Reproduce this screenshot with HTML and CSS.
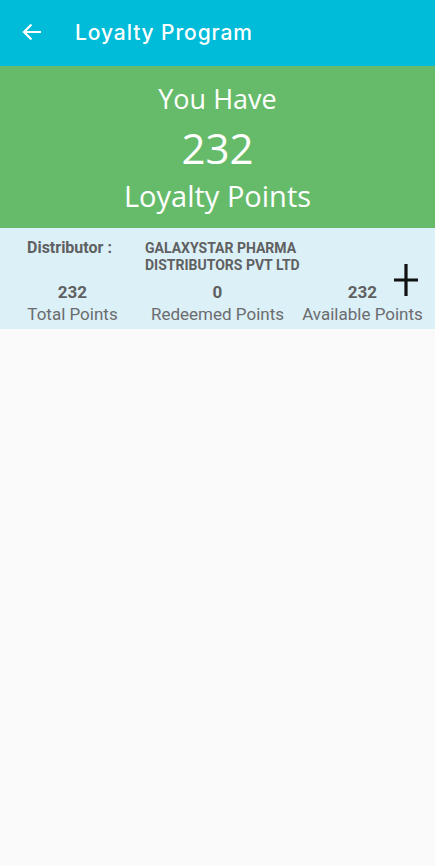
FILE: index.html
```html
<!DOCTYPE html>
<html lang="en">
<head>
    <meta charset="UTF-8">
    <title>Loyalty Program</title>
    <link rel="stylesheet" href="styles.css">
</head>
<body>
<div class="toolbar">
    <svg class="back" width="20" height="18" viewBox="0 0 20 18">
        <path d="M19 9H2M9.5 1.5L2 9l7.5 7.5" fill="none" stroke="#fff" stroke-width="2.2"/>
    </svg>
    <div class="title">Loyalty Program</div>
</div>

<div class="summary">
    <div class="have">You Have</div>
    <div class="total">232</div>
    <div class="label">Loyalty Points</div>
</div>

<div class="distributor">
    <div class="dist-row">
        <div class="dist-key">Distributor :</div>
        <div class="dist-name">GALAXYSTAR PHARMA<br>DISTRIBUTORS PVT LTD</div>
    </div>
    <div class="stats">
        <div class="stat">
            <div class="num">232</div>
            <div class="cap">Total Points</div>
        </div>
        <div class="stat">
            <div class="num">0</div>
            <div class="cap">Redeemed Points</div>
        </div>
        <div class="stat">
            <div class="num">232</div>
            <div class="cap">Available Points</div>
        </div>
    </div>
    <svg class="plus" width="24" height="32" viewBox="0 0 24 32">
        <path d="M12 0v32M0 16h24" stroke="#111" stroke-width="3.2"/>
    </svg>
</div>
</body>
</html>
```

FILE: styles.css
```css
body {
    margin: 0;
    background: #fafafa;
    font-family: "Open Sans", "Noto Sans", sans-serif;
    height: 866px;
    overflow: hidden;
}

.toolbar {
    display: flex;
    align-items: center;
    height: 66px;
    background: #00bcd8;
    color: #fff;
}

.back {
    margin-left: 22px;
    margin-top: -2px;
}

.title {
    margin-left: 33px;
    margin-top: -2px;
    font-family: "Inter", sans-serif;
    font-weight: 500;
    font-size: 21px;
    letter-spacing: 0.9px;
}

.summary {
    background: #66bb6a;
    color: #fff;
    text-align: center;
    height: 162px;
    box-sizing: border-box;
    padding-top: 15px;
}

.have {
    font-size: 27px;
    line-height: 36px;
}

.total {
    font-size: 42px;
    line-height: 62px;
}

.label {
    font-size: 29px;
    line-height: 34px;
}

.distributor {
    position: relative;
    height: 101px;
    box-sizing: border-box;
    background: #dcf0f7;
    padding-top: 11px;
    font-family: "Roboto", sans-serif;
}

.dist-row {
    display: flex;
}

.dist-key {
    width: 118px;
    padding-left: 27px;
    font-size: 16px;
    line-height: 18px;
    font-weight: bold;
    color: #5f6062;
}

.dist-name {
    font-size: 14px;
    font-weight: bold;
    color: #5f6062;
    line-height: 17px;
    margin-top: 1px;
}

.stats {
    display: grid;
    grid-template-columns: 1fr 1fr 1fr;
    text-align: center;
    margin-top: 8px;
}

.num {
    font-size: 17px;
    font-weight: bold;
    color: #5f6062;
    line-height: 20px;
}

.cap {
    font-size: 17px;
    color: #6b6c6e;
    line-height: 24px;
}

.plus {
    position: absolute;
    right: 17px;
    top: 36px;
}
```
